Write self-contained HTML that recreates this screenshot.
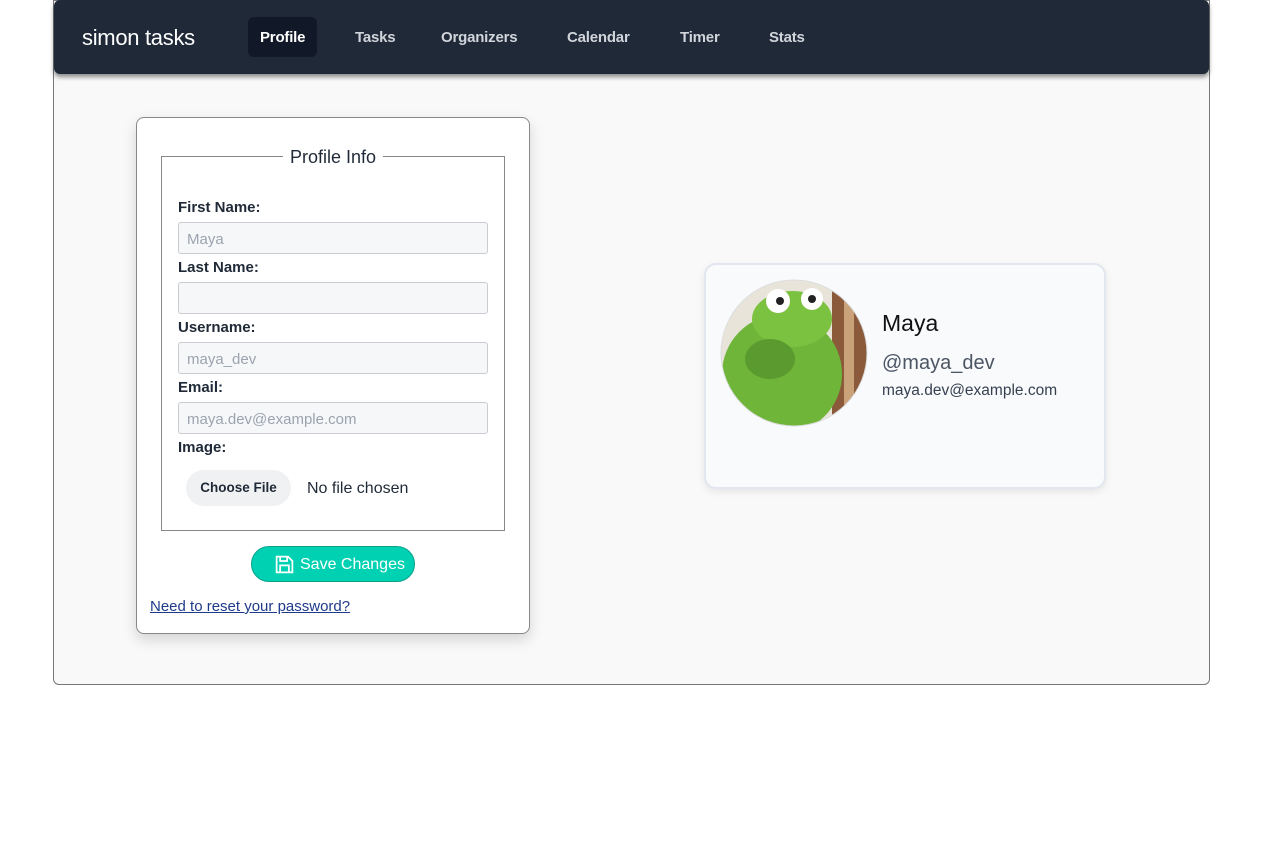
<!DOCTYPE html>
<html><head><style>
*{box-sizing:border-box;margin:0;padding:0}
body{width:1263px;height:849px;background:#fff;font-family:"Liberation Sans",sans-serif;position:relative;overflow:hidden}
.frame{position:absolute;left:53px;top:0;width:1157px;height:685px;border:1px solid #777;border-radius:0 0 6px 6px;background:#f9f9f9}
.nav{position:absolute;left:54px;top:0;width:1155px;height:74px;background:#1f2937;border-radius:6px;box-shadow:0 3px 5px rgba(0,0,0,.45)}
.brand{position:absolute;left:28px;top:25px;color:#fff;font-size:22px;letter-spacing:-0.3px}
.nl{position:absolute;top:17px;height:40px;line-height:42px;color:#d1d5db;font-weight:bold;font-size:15px;letter-spacing:-0.2px}
.act{background:#111827;color:#fff;border-radius:6px;padding:0 12px}
.card{position:absolute;left:136px;top:117px;width:394px;height:517px;background:#fff;border:1px solid #888;border-radius:8px;box-shadow:0 6px 14px rgba(0,0,0,.15)}
.fs{position:absolute;left:24px;top:38px;width:344px;height:375px;border:1px solid #888}
.leg{position:absolute;left:0;right:0;top:-10px;text-align:center;font-size:18px;color:#1f2937}
.leg span{background:#fff;padding:0 7px}
.lb{position:absolute;left:16px;font-weight:bold;font-size:15px;color:#1f2937}
.in{position:absolute;left:16px;width:310px;height:32px;background:#f6f7f9;border:1px solid #c9ccd1;border-radius:3px;font-size:15px;color:#9ca3af;padding:8px 8px 6px}
.cf{position:absolute;left:24px;top:313px;width:105px;height:36px;background:#f0f1f3;border-radius:18px;font-size:13.5px;font-weight:bold;color:#1f2937;text-align:center;line-height:36px}
.save{position:absolute;left:114px;top:428px;width:164px;height:36px;background:#00d1b2;border:1px solid #0aa28b;border-radius:18px;color:#fff;font-size:16px;line-height:35px;padding-left:48px}
.rc{position:absolute;left:704px;top:263px;width:402px;height:226px;background:#f8fafc;border:2px solid #e2e6ef;border-radius:12px;box-shadow:0 3px 8px rgba(0,0,0,.08)}
</style></head><body>
<div class="frame"></div>
<div class="nav">
<div class="brand">simon tasks</div>
<div class="nl act" style="left:194px">Profile</div>
<div class="nl" style="left:301px">Tasks</div>
<div class="nl" style="left:387px">Organizers</div>
<div class="nl" style="left:513px">Calendar</div>
<div class="nl" style="left:626px">Timer</div>
<div class="nl" style="left:715px">Stats</div>
</div>
<div class="card">
<div class="fs">
<div class="leg"><span>Profile Info</span></div>
<div class="lb" style="top:42px">First Name:</div><div class="in" style="top:65px">Maya</div>
<div class="lb" style="top:102px">Last Name:</div><div class="in" style="top:125px"></div>
<div class="lb" style="top:162px">Username:</div><div class="in" style="top:185px">maya_dev</div>
<div class="lb" style="top:222px">Email:</div><div class="in" style="top:245px">maya.dev@example.com</div>
<div class="lb" style="top:282px">Image:</div>
<div class="cf">Choose File</div>
<div style="position:absolute;left:145px;top:323px;font-size:16px;color:#1f2937">No file chosen</div>
</div>
<div class="save"><svg style="position:absolute;left:22px;top:7px" width="21" height="21" viewBox="0 0 24 24" fill="none" stroke="#fff" stroke-width="2"><path d="M4 3h12l5 5v13H3V3z"/><path d="M7 3v5h8V3M7 21v-8h10v8"/></svg>Save Changes</div>
<div style="position:absolute;left:13px;top:480px;font-size:15px;color:#1e3a8a;text-decoration:underline">Need to reset your password?</div>
</div>
<div class="rc">
<svg style="position:absolute;left:14px;top:14px" width="148" height="148" viewBox="0 0 148 148">
<defs><clipPath id="c"><circle cx="74" cy="74" r="73"/></clipPath></defs>
<g clip-path="url(#c)">
<rect width="148" height="148" fill="#e8e4da"/>
<rect x="112" y="0" width="36" height="148" fill="#8a5a3a"/>
<rect x="124" y="20" width="10" height="128" fill="#c9a27a"/>
<ellipse cx="62" cy="95" rx="60" ry="60" fill="#6fb53a"/>
<ellipse cx="72" cy="40" rx="40" ry="28" fill="#7cc241"/>
<circle cx="58" cy="22" r="12" fill="#fff"/><circle cx="92" cy="20" r="11" fill="#fff"/>
<circle cx="60" cy="22" r="4" fill="#222"/><circle cx="92" cy="20" r="4" fill="#222"/>
<ellipse cx="50" cy="80" rx="25" ry="20" fill="#5a9a2e"/>
</g>
<circle cx="74" cy="74" r="73" fill="none" stroke="#ddd" stroke-width="1"/>
</svg>
<div style="position:absolute;left:176px;top:45px;font-size:23px;color:#111">Maya</div>
<div style="position:absolute;left:176px;top:87px;font-size:20px;color:#4b5563">@maya_dev</div>
<div style="position:absolute;left:176px;top:117px;font-size:15.5px;color:#374151">maya.dev@example.com</div>
</div>
</body></html>
